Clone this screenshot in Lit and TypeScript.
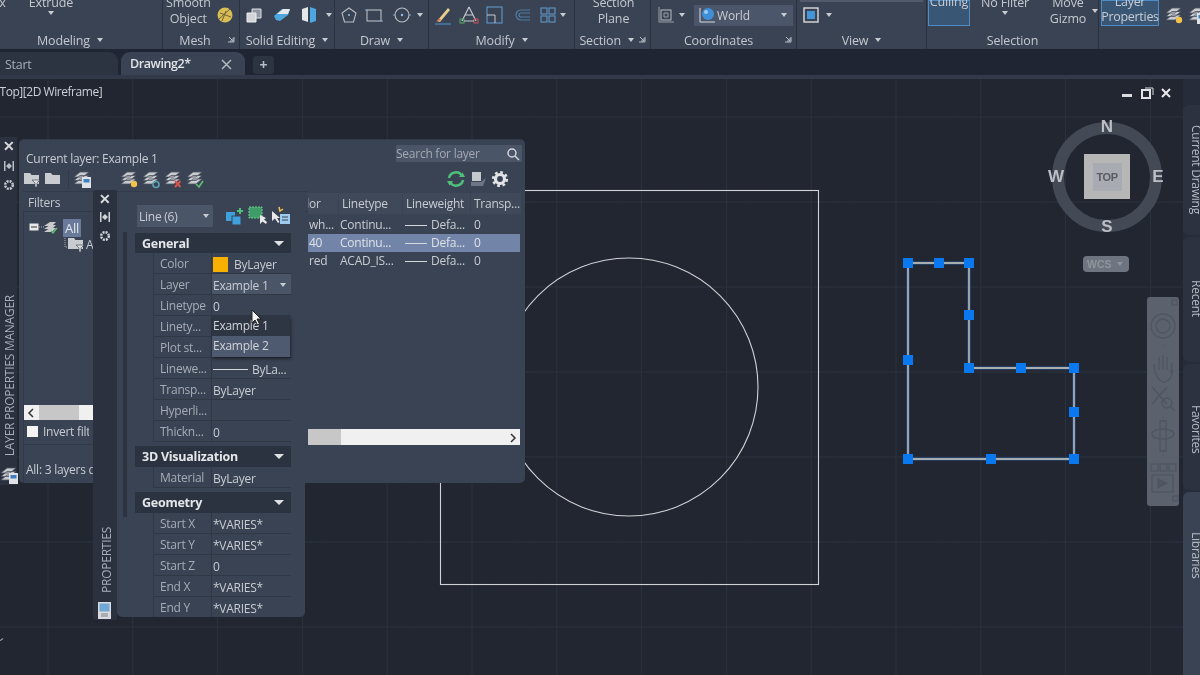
import { LitElement, html, css, svg } from "lit";
import { customElement } from "lit/decorators.js";

const ic = (w: number, content: unknown) => html`<svg class="ic" width=${w} height="20" viewBox="0 0 ${w} 20">${content}</svg>`;
const arrow = html`<i class="dd"></i>`;
const launcher = html`<svg class="launch" width="7" height="7" viewBox="0 0 7 7"><path d="M1 1L5 5M5 2V5H2M0 6H6V1" stroke="#b8bdc6" fill="none" stroke-width="1"/></svg>`;

const layerIcon = (accent: string, kind: string) => html`<svg width="20" height="20" viewBox="0 0 20 20">
  <path d="M2 8L8 3H17L11 8ZM2 11.500L8 6.500H17L11 11.500ZM2 15L8 10H17L11 15Z" fill="#c9cbcd" stroke="#4a5262" stroke-width=".8"/>
  ${kind === "sun" ? svg`<circle cx="15" cy="15" r="3.200" fill=${accent}/>` : ""}
  ${kind === "x" ? svg`<path d="M12 12L17.500 18M17.500 12L12 18" stroke=${accent} stroke-width="2"/>` : ""}
  ${kind === "check" ? svg`<path d="M11 15L14 18L18 12" stroke=${accent} stroke-width="1.600" fill="none"/>` : ""}
  ${kind === "dot" ? svg`<circle cx="15" cy="15.500" r="3" fill="none" stroke=${accent} stroke-width="1.600"/>` : ""}
  ${kind === "doc" ? svg`<rect x="10" y="8" width="9" height="11" fill="#dfe3e8"/><rect x="11.500" y="10" width="6" height="3.500" fill="#3d7fc0"/>` : ""}
</svg>`;

const folder = (filter: boolean) => html`<svg width="18" height="18" viewBox="0 0 18 18"><path d="M1 3H7L8.500 5H16V14H1Z" fill="#c8cbcf"/>${filter ? svg`<path d="M9 10H17L14 13V17H12V13Z" fill="#d8dadd" stroke="#3a4353" stroke-width=".6"/>` : ""}</svg>`;

const rows1 = [["Color", "swatch"], ["Layer", "select"], ["Linetype", "0"], ["Linety...", ""], ["Plot st...", ""], ["Linewe...", "lw"], ["Transp...", "ByLayer"], ["Hyperli...", ""], ["Thickn...", "0"]];
const rows3 = ["Start X|*VARIES*", "Start Y|*VARIES*", "Start Z|0", "End X|*VARIES*", "End Y|*VARIES*"].map((s) => s.split("|"));

@customElement("app-root")
export class AppRoot extends LitElement {
  static styles = css`
    :host { display: block; width: 1200px; height: 675px; overflow: hidden; position: relative; background: #212631; font-family: "Open Sans", "Liberation Sans", sans-serif; color: #cdd1d7; font-size: 12px; letter-spacing: -0.25px; filter: blur(0.35px); }
    .shell { display: flex; flex-direction: column; height: 675px; }
    .ribbon { display: flex; height: 49px; background: #3a4353; flex: none; overflow: hidden; letter-spacing: -0.15px; }
    .group { display: flex; flex-direction: column; flex: none; border-right: 1px solid #2a303c; box-sizing: border-box; height: 49px; }
    .content { height: 30px; display: flex; align-items: center; flex: none; position: relative; }
    .label { height: 19px; display: flex; align-items: center; justify-content: center; gap: 7px; color: #c4c8cf; font-size: 12.5px; line-height: 19px; padding-top: 1px; box-sizing: border-box; position: relative; white-space: nowrap; }
    .launch { position: absolute; right: 4px; top: 6px; }
    .dd { display: inline-block; width: 0; height: 0; border-left: 3.500px solid transparent; border-right: 3.500px solid transparent; border-top: 4px solid #c8ccd2; flex: none; }
    .ic { display: block; flex: none; }
    .ml3 { margin-left: 3px; }
    .ml-3 { margin-left: -3px; }
    .txt { display: flex; flex-direction: column; align-items: center; line-height: 16px; font-size: 12.5px; color: #c4c8cf; align-self: flex-end; white-space: nowrap; padding-bottom: 3px; }
    .boxt { margin-left: -16px; padding-bottom: 19px; }
    .extrude { padding-bottom: 15px; gap: 0; }
    .g1 { width: 163px; } .g1 .label { padding-right: 22px; } .g1 .content { gap: 23px; align-items: flex-end; }
    .g2 { width: 77px; } .g2 .label { padding-right: 12px; } .g2 .content { padding-left: 3px; gap: 3px; }
    .g3 { width: 95px; } .g3 .content { padding-left: 5px; gap: 7px; }
    .g4 { width: 94px; } .g4 .content { padding-left: 4px; gap: 5px; }
    .g5 { width: 146px; } .g5 .content { padding-left: 4px; gap: 5px; }
    .g6 { width: 76px; } .g6 .label { justify-content: flex-end; padding-right: 16px; } .g6 .content { justify-content: center; padding-left: 2px; }
    .g7 { width: 146px; } .g7 .label { padding-right: 10px; } .g7 .content { padding-left: 5px; gap: 3px; }
    .g8 { width: 130px; } .g8 .content { padding-left: 4px; gap: 5px; }
    .g9 { width: 172px; } .g9 .content { padding-left: 1px; align-items: flex-start; }
    .g10 { width: 101px; border-right: 0; } .g10 .content { padding-left: 2px; gap: 3px; align-items: flex-start; }
    .world { width: 99px; height: 21px; background: #4b566a; display: flex; align-items: center; box-sizing: border-box; padding: 0 6px 0 3px; gap: 0; font-size: 12px; color: #c9cdd4; margin-left: 6px; }
    .world .dd { margin-left: auto; }
    .topbar { position: absolute; left: 3px; top: -1px; width: 123px; height: 3px; background: #52596a; }
    .btnblue { background: #3a5675; border: 1px solid #4f8bc5; height: 26px; box-sizing: border-box; display: flex; flex-direction: column; align-items: center; justify-content: flex-end; line-height: 15px; flex: none; font-size: 12.5px; color: #c8ccd2; white-space: nowrap; }
    .culling { width: 42px; padding-bottom: 16px; }
    .props-btn { width: 58px; padding-bottom: 1px; letter-spacing: -0.3px; }
    .sel-col { display: flex; flex-direction: column; align-items: center; line-height: 16px; font-size: 12.5px; color: #c4c8cf; white-space: nowrap; }
    .nofilter { width: 68px; height: 26px; justify-content: flex-end; padding-bottom: 11px; gap: 0; box-sizing: border-box; margin-left: 1px; }
    .gizmo { width: 56px; height: 27px; justify-content: flex-end; position: relative; margin-left: 1px; }
    .gizmo .dd { position: absolute; right: -2px; top: 9px; }
    .iconpad { margin: 5px 0 0 2px; display: flex; }
    .iconpad2 { margin: 5px 0 0 0; display: flex; }
    .tabs { height: 26px; background: #1f2533; flex: none; display: flex; align-items: flex-end; gap: 3px; }
    .tab { height: 23px; display: flex; align-items: center; box-sizing: border-box; font-size: 12.5px; line-height: 22px; padding-top: 2px; }
    .start { width: 118px; padding-left: 5px; background: #2c3341; color: #a7adb7; border-radius: 0 9px 0 0; padding-top: 3px; }
    .drawing { width: 124px; padding: 1px 13px 0 9px; justify-content: space-between; background: #3a4353; color: #e2e4e8; font-weight: 600; border-radius: 9px 9px 0 0; letter-spacing: -0.4px; }
    .plus { width: 21px; height: 18px; margin: 0 0 1px 5px; background: #2c3341; color: #b8bcc4; justify-content: center; border-radius: 3px; font-weight: 700; font-size: 14px; padding-top: 0; }
    .band { height: 4px; flex: none; background: #323a49; }
    .canvas { flex: 1; position: relative; background: #212631; overflow: hidden; }
    .canvas > svg.draw { position: absolute; left: 0; top: -79px; }
    .vplabel { position: absolute; left: -4px; top: 4px; font-size: 12px; color: #ccd0d6; white-space: nowrap; letter-spacing: -0.45px; }
    .winctl { position: absolute; left: 1120px; top: 6px; }
    .compass { position: absolute; left: 1040px; top: 37px; width: 135px; height: 200px; letter-spacing: 0; }
    .cp { position: absolute; font: 700 17px/18px "Liberation Sans", sans-serif; color: #bdbfc4; width: 24px; text-align: center; }
    .cube { position: absolute; left: 44px; top: 38px; width: 46px; height: 45px; background: #b6b6b6; display: flex; align-items: center; justify-content: center; }
    .cube span { width: 29px; height: 28px; background: #a9abb2; color: #585c66; font: 700 11px/28px "Liberation Sans", sans-serif; text-align: center; letter-spacing: -0.4px; }
    .wcs { position: absolute; left: 43px; top: 140px; width: 46px; height: 16px; border-radius: 4px; background: #6e7480; color: #8f949c; font: 700 10.500px/16px "Liberation Sans", sans-serif; padding-left: 4px; box-sizing: border-box; display: flex; align-items: center; gap: 5px; }
    .wcs .dd { border-top-color: #8f949c; }
    .navbar { position: absolute; left: 1147px; top: 218px; width: 32px; height: 209px; background: #5b626d; border-radius: 3px; }
    .rdock { position: absolute; left: 1183px; top: 0; width: 17px; height: 596px; background: #262c39; display: flex; flex-direction: column; gap: 2px; padding-top: 26px; box-sizing: border-box; overflow: hidden; }
    .rtab { width: 27px; background: #2c3240; border-radius: 6px 0 0 6px; writing-mode: vertical-rl; color: #b5bac3; font-size: 12px; padding: 20px 0 0 0; line-height: 27px; overflow: hidden; white-space: nowrap; box-sizing: border-box; flex: none; }
    .rt1 { height: 130px; } .rt2 { height: 125px; padding-top: 43px; } .rt3 { height: 126px; padding-top: 41px; } .rt4 { height: 200px; background: #3a4353; padding-top: 40px; }
    .lm { position: absolute; left: 0; top: 58px; display: flex; width: 525px; height: 348px; }
    .strip { background: #2b313e; display: flex; flex-direction: column; align-items: center; flex: none; position: relative; }
    .lm .strip { width: 17px; margin-right: 2px; }
    .lm .strip .x { height: 18px; line-height: 18px; margin-bottom: 6px; }
    .strip .x { font: 700 14px/20px "Liberation Sans", sans-serif; color: #d8dadd; height: 20px; }
    .strip svg { display: block; margin-bottom: 8px; }
    .vtxt { writing-mode: vertical-rl; transform: rotate(180deg); position: absolute; white-space: nowrap; color: #a9afb9; font-size: 12px; }
    .lm .vtxt { left: 1px; top: 158px; }
    .lmbody { flex: 1; background: #3a4353; border-radius: 5px; padding: 5px 3px 0 4px; display: flex; flex-direction: column; box-sizing: border-box; border-top: 1px solid #323a49; margin-top: 2px; margin-bottom: 2px; }
    .lmhead { display: flex; justify-content: space-between; align-items: flex-start; height: 25px; padding-left: 3px; flex: none; }
    .lmhead b { font-weight: 400; color: #c8ccd2; font-size: 12px; margin-top: 5px; }
    .search { width: 126px; height: 17px; background: #4b5568; color: #a3a9b3; font-size: 12px; line-height: 17px; padding-left: 0; box-sizing: border-box; display: flex; justify-content: space-between; align-items: center; padding-right: 2px; }
    .lmtools { display: flex; height: 18px; align-items: center; flex: none; }
    .lmtools svg { display: block; flex: none; }
    .sp { flex: none; }
    .lmmain { display: flex; flex: 1; min-height: 0; margin-top: 5px; }
    .filters { width: 285px; flex: none; display: flex; flex-direction: column; position: relative; margin-top: -2px; }
    .fhead { height: 21px; line-height: 21px; padding-left: 5px; color: #c3c7ce; border-bottom: 1px solid #323a49; border-top: 1px solid #323a49; box-sizing: border-box; flex: none; }
    .tree { flex: 1; position: relative; border-left: 1px solid #323a49; }
    .allsel { position: absolute; left: 39px; top: 7px; background: #6a7a9b; color: #e4e6ea; padding: 0 2px; line-height: 18px; font-size: 13px; }
    .hs { position: absolute; left: 0; top: 193px; width: 69px; height: 15px; background: #f0f0f0; }
    .hs i { position: absolute; left: 15px; top: 0; width: 40px; height: 15px; background: #c7c7c7; }
    .inv { position: absolute; left: 3px; top: 211px; width: 62px; overflow: hidden; display: flex; align-items: center; gap: 5px; white-space: nowrap; color: #c8ccd2; }
    .inv i { width: 11px; height: 11px; background: #f4f4f4; display: block; flex: none; }
    .status { position: absolute; left: 2px; top: 249px; white-space: nowrap; color: #c8ccd2; }
    .fdiv { position: absolute; left: -1px; top: 232px; width: 100%; height: 1px; background: #323a49; }
    .table { flex: 1; position: relative; font-size: 12px; overflow: hidden; }
    .tr { display: grid; grid-template-columns: 31px 64px 68px 1fr; height: 18px; line-height: 18px; color: #c8ccd2; white-space: nowrap; }
    .th { height: 21px; line-height: 21px; margin-bottom: 2px; }
    .tr span { padding-left: 1px; overflow: hidden; }
    .tr span:last-child { padding-left: 3px; }
    .th span, .th span:last-child { background: #404959; margin-right: 1px; padding-left: 3px; }
    .th span:first-child { padding-left: 0; text-indent: -16px; }
    .tr.sel { background: #7284a7; color: #dee2e8; width: 212px; }
    .tr .w { display: flex; align-items: center; gap: 4px; padding-left: 2px; }
    .tr .w i { display: block; width: 22px; height: 1px; background: #d5d7da; flex: none; }
    .vs { position: absolute; left: 0; bottom: 38px; height: 16px; width: 212px; background: #f0f0f0; color: #333; }
    .vs i { position: absolute; left: 0; top: 0; width: 33px; height: 16px; background: #c7c7c7; }
    .vs svg { position: absolute; right: 3px; top: 4px; }
    .pp { position: absolute; left: 93px; top: 111px; display: flex; width: 212px; height: 430px; }
    .pp .strip { width: 24px; border-radius: 3px 0 0 3px; }
    .pp .strip .x { margin-top: -1px; }
    .pp .vtxt { left: 5px; top: 337px; }
    .ppdoc { position: absolute; left: 5px; top: 412px; }
    .ppbody { flex: 1; background: #3a4353; border-radius: 5px; margin-top: 2px; margin-bottom: 3px; padding: 12px 14px 0 19px; box-sizing: border-box; position: relative; overflow: hidden; }
    .track { position: absolute; left: 6px; top: 40px; width: 4px; height: 285px; background: #2d3441; }
    .ptop { display: flex; align-items: center; gap: 12px; height: 24px; margin-bottom: 5px; margin-left: 1px; }
    .psel { width: 83px; height: 22px; background: #4b5568; display: flex; align-items: center; justify-content: space-between; padding: 0 4px 0 2px; box-sizing: border-box; font-size: 12px; color: #c8ccd2; }
    .ptools { display: flex; gap: 3px; }
    .sec { height: 21px; background: #2c3340; font-weight: 700; color: #e4e6e9; padding: 0 7px; display: flex; align-items: center; justify-content: space-between; font-size: 12.500px; margin-left: -1px; }
    .sec.first { height: 20px; }
    .sec .dd { border-left-width: 5px; border-right-width: 5px; border-top-width: 5px; border-top-color: #dfe1e4; }
    .sec.gap { margin-top: 4px; }
    .prow { height: 21px; display: grid; grid-template-columns: 59px 1fr; border-bottom: 1px solid #303745; box-sizing: border-box; margin-left: 17px; white-space: nowrap; }
    .prow .k { color: #a6acb6; padding-left: 6px; border-left: 1px solid #303745; border-right: 1px solid #303745; overflow: hidden; font-size: 12px; line-height: 22px; }
    .prow .v { color: #c8ccd2; padding-left: 1px; padding-top: 2px; box-sizing: border-box; overflow: hidden; display: flex; align-items: center; font-size: 12px; }
    .swatch { width: 15px; height: 15px; background: #f7b000; margin-right: 6px; flex: none; }
    .lwline { width: 35px; height: 1px; background: #d5d7da; margin-right: 4px; flex: none; }
    .v.selv { background: #4b5568; justify-content: space-between; padding-right: 5px; }
    .menu { position: absolute; left: 95px; top: 124px; width: 78px; height: 41px; background: #2e3543; box-shadow: 1px 2px 3px rgba(0,0,0,.45); display: flex; flex-direction: column; color: #d0d3d8; font-size: 12px; }
    .menu div { height: 20px; line-height: 20px; padding-left: 1px; }
    .menu .hi { background: #4e5a6f; height: 21px; }
    .cursor { position: absolute; left: 251px; top: 230px; }
    .ucs { position: absolute; left: 0; top: 560px; width: 5px; height: 5px; border-top: 1px solid #9aa0a8; transform: rotate(-35deg); }
  `;

  ribbon() {
    return html`<div class="ribbon">
      <div class="group g1"><div class="content"><div class="txt boxt">Box</div>
        <div class="sel-col extrude">Extrude<i class="dd"></i></div></div>
        <div class="label">Modeling ${arrow}</div></div>
      <div class="group g2"><div class="content"><div class="txt"><span>Smooth</span><span>Object</span></div>
        ${ic(22, svg`<circle cx="11" cy="10" r="7.500" fill="#d9bd55"/><path d="M5 14L16 4M8 16L12 6M6 8L17 12" stroke="#6d6238" stroke-width="1"/>`)}</div>
        <div class="label">Mesh${launcher}</div></div>
      <div class="group g3"><div class="content">
        ${ic(20, svg`<path d="M7 4H16V13H7Z" fill="#8f97a4" stroke="#dfe1e4"/><path d="M2 8H11V17H2Z" fill="#d3d5d8" stroke="#eee"/>`)}
        ${ic(20, svg`<path d="M2 11L10 4H18L16 10L8 16L4 15Z" fill="#4ea6e0"/><path d="M5 9L11 4H18L16 9H9Z" fill="#e6e8ea"/>`)}
        ${ic(20, svg`<path d="M3 4L9 2V17L3 15Z" fill="#e4e6e8"/><path d="M11 2L17 4V16L11 18Z" fill="#4ea6e0"/>`)}
        ${arrow}</div><div class="label">Solid Editing ${arrow}</div></div>
      <div class="group g4"><div class="content">
        ${ic(20, svg`<path d="M10 3L17 8L14.500 17H5.500L3 8Z" fill="none" stroke="#b9bdc4" stroke-width="1.100"/><circle cx="10" cy="10" r="1" fill="#8fc0e8"/>`)}
        ${ic(20, svg`<rect x="3" y="5" width="14" height="11" fill="none" stroke="#b9bdc4" stroke-width="1.100"/><path d="M3 5H1M17 16H19" stroke="#7fb2dc"/>`)}
        <span class="ml3">${ic(20, svg`<circle cx="10" cy="10" r="7" fill="none" stroke="#b9bdc4" stroke-width="1.100"/><circle cx="10" cy="10" r="1.200" fill="#8fc0e8"/><path d="M3 10H1M17 10H19" stroke="#7fb2dc"/>`)}</span>
        ${arrow}</div><div class="label">Draw ${arrow}</div></div>
      <div class="group g5"><div class="content">
        ${ic(20, svg`<path d="M4 16L15 3L17 5L7 17Z" fill="#e7cf8e"/><path d="M3 17L6 13L8 15Z" fill="#d86b5b"/><path d="M2 19H18" stroke="#4e8bc0" stroke-width="1.200"/>`)}
        ${ic(22, svg`<path d="M11 2L4 16M11 2L18 16M7 10H15" stroke="#c4c8cf" stroke-width="1.200" fill="none"/><rect x="2" y="14" width="4" height="4" fill="none" stroke="#55a86a"/><rect x="16" y="14" width="4" height="4" fill="none" stroke="#c85555"/><path d="M6 16H16" stroke="#c4c8cf"/>`)}
        ${ic(20, svg`<rect x="2" y="2" width="15" height="16" fill="none" stroke="#5f97c8" stroke-width="1.100"/><path d="M2 10H10V18" fill="none" stroke="#c4c8cf"/>`)}
        <span class="ml3">${ic(20, svg`<path d="M17 5H8A5 5 0 0 0 8 15H17M17 8H8A2 2 0 0 0 8 12H17" fill="none" stroke="#4f7da6" stroke-width="1.200"/>`)}</span>
        ${ic(20, svg`<g fill="none" stroke="#5f97c8" stroke-width="1.100"><rect x="3" y="3" width="6" height="6"/><rect x="11" y="3" width="6" height="6"/><rect x="3" y="11" width="6" height="6"/><rect x="11" y="11" width="6" height="6"/></g>`)}
        <i class="dd ml-3"></i></div><div class="label">Modify ${arrow}</div></div>
      <div class="group g6"><div class="content"><div class="txt"><span>Section</span><span>Plane</span></div></div>
        <div class="label">Section ${arrow}${launcher}</div></div>
      <div class="group g7"><div class="content">
        ${ic(20, svg`<rect x="5" y="5" width="10" height="10" fill="none" stroke="#b9bdc4"/><path d="M3 2V17H18M8 8H12V12H8Z" fill="none" stroke="#9aa0a8"/>`)}
        ${arrow}
        <div class="world">${ic(20, svg`<path d="M3 3V17H18" fill="none" stroke="#d8dadd"/><circle cx="11" cy="9" r="6" fill="#3f8fd8"/><circle cx="9" cy="7" r="2" fill="#9ccbef"/>`)}World ${arrow}</div>
        </div><div class="label">Coordinates${launcher}</div></div>
      <div class="group g8"><div class="content"><div class="topbar"></div>
        ${ic(20, svg`<rect x="3" y="3" width="14" height="14" fill="none" stroke="#d8dadd" stroke-width="1.400"/><rect x="6" y="6" width="8" height="8" fill="#4296d8"/>`)}
        ${arrow}</div><div class="label">View ${arrow}</div></div>
      <div class="group g9"><div class="content">
        <div class="btnblue culling">Culling</div>
        <div class="sel-col nofilter">No Filter${arrow}</div>
        <div class="sel-col gizmo"><span>Move</span><span>Gizmo</span>${arrow}</div>
        </div><div class="label">Selection</div></div>
      <div class="group g10"><div class="content">
        <div class="btnblue props-btn"><span>Layer</span><span>Properties</span></div>
        <span class="iconpad">${layerIcon("#f2c14e", "sun")}</span>
        <span class="iconpad2">${layerIcon("#57a4dc", "doc")}</span>
        </div><div class="label"></div></div>
    </div>`;
  }

  tabs() {
    return html`<div class="tabs">
      <div class="tab start">Start</div>
      <div class="tab drawing"><span>Drawing2*</span><svg width="11" height="11" viewBox="0 0 11 11"><path d="M1 1L10 10M10 1L1 10" stroke="#b4b9c1" stroke-width="1.500"/></svg></div>
      <div class="tab plus">+</div>
    </div>`;
  }

  drawing() {
    const vx = Array.from({ length: 14 }, (_, i) => 48 + i * 84.8);
    const hy = Array.from({ length: 8 }, (_, i) => 32 + i * 85);
    const fx = Array.from({ length: 60 }, (_, i) => 48 + i * 21.2 - 21.2);
    const pts = "908,263 969,263 969,368 1074,368 1074,459 908,459 908,263";
    const grips = [[908,263],[939,263],[969,263],[969,315],[969,368],[1021,368],[1074,368],[1074,412],[1074,459],[991,459],[908,459],[908,360]];
    return html`<svg class="draw" width="1200" height="675" viewBox="0 0 1200 675">
      ${fx.map((x) => svg`<line x1=${x} x2=${x} y1="79" y2="675" stroke="#232834"/>`)}
      ${vx.map((x) => svg`<line x1=${x} x2=${x} y1="79" y2="675" stroke="#2d3340"/>`)}
      ${hy.map((y) => svg`<line x1="0" x2="1200" y1=${y} y2=${y} stroke="#2d3340"/>`)}
      <rect x="440.500" y="190.500" width="378" height="394" fill="none" stroke="#d0d2d5" stroke-width="1.100"/>
      <circle cx="629" cy="387" r="129" fill="none" stroke="#d0d2d5" stroke-width="1.100"/>
      <polyline points=${pts} fill="none" stroke="#2a5fa8" stroke-width="4" opacity=".4"/>
      <polyline points=${pts} fill="none" stroke="#a8adb0" stroke-width="1.800"/>
      ${grips.map(([x, y]) => svg`<rect x=${x - 5} y=${y - 5} width="10" height="10" fill="#0a78ee"/>`)}
    </svg>`;
  }

  nav() {
    return html`<div class="navbar"><svg width="32" height="209" viewBox="0 0 32 209" fill="none" stroke="#4f5661" stroke-width="1.300">
      <circle cx="16" cy="29" r="12"/><circle cx="16" cy="29" r="7"/>
      <rect x="25" y="3" width="5" height="5"/><path d="M16 48v1"/>
      <path d="M8 75L7 67M12 73V60M16 73V58M20 73V60M24 76L25 66M8 75Q12 86 18 85Q24 84 26 73"/>
      <path d="M5 90L20 107M20 90L5 107"/><circle cx="20" cy="106" r="5"/><path d="M24 110L28 114"/>
      <path d="M16 120v1"/><ellipse cx="16" cy="137" rx="11" ry="5"/><path d="M13 124H19V154H13Z"/><path d="M16 158v1"/>
      <rect x="4" y="167" width="7" height="7"/><rect x="13" y="167" width="7" height="7"/><rect x="22" y="167" width="7" height="7"/>
      <rect x="5" y="178" width="21" height="17"/><path d="M11 182L20 186L11 191Z" fill="#4f5661"/><rect x="26" y="199" width="5" height="5"/>
    </svg></div>`;
  }

  compass() {
    return html`<div class="compass">
      <svg width="135" height="130" viewBox="0 0 135 130" style="position:absolute;left:0;top:0"><circle cx="67" cy="61" r="49" fill="none" stroke="#434955" stroke-width="12"/></svg>
      <div class="cp" style="left:55px;top:2px">N</div>
      <div class="cp" style="left:4px;top:52px">W</div>
      <div class="cp" style="left:106px;top:52px">E</div>
      <div class="cp" style="left:55px;top:102px">S</div>
      <div class="cube"><span>TOP</span></div>
      <div class="wcs">WCS ${arrow}</div>
    </div>`;
  }

  layerManager() {
    return html`<div class="lm">
      <div class="strip">
        <div class="x">✕</div>
        <svg width="10" height="10" viewBox="0 0 10 10"><path d="M0 0H1.500V10H0ZM8.500 0H10V10H8.500ZM2 5L5 2V8ZM8 5L5 2V8Z" fill="#b8bcc4"/></svg>
        <svg width="12" height="12" viewBox="0 0 12 12"><circle cx="6" cy="6" r="3.800" fill="none" stroke="#c9cdd3" stroke-width="2.500" stroke-dasharray="2 1"/></svg>
        <div class="vtxt">LAYER PROPERTIES MANAGER</div>
        <span style="position:absolute;left:-1px;top:328px">${layerIcon("#fff", "doc")}</span>
      </div>
      <div class="lmbody">
        <div class="lmhead"><b>Current layer: Example 1</b>
          <div class="search">Search for layer<svg width="14" height="14" viewBox="0 0 14 14"><circle cx="6" cy="6" r="4" fill="none" stroke="#d3d6da" stroke-width="1.500"/><path d="M9 9L13 13" stroke="#d3d6da" stroke-width="1.500"/></svg></div></div>
        <div class="lmtools">
          ${folder(true)}<span class="sp" style="width:3px"></span>${folder(false)}
          <span class="sp" style="width:6px;height:18px;border-right:1px solid #323a49;margin-right:3px"></span>
          ${layerIcon("#fff", "doc")}
          <span class="sp" style="width:27px"></span>
          ${layerIcon("#f2c14e", "sun")}<span class="sp" style="width:2px"></span>
          ${layerIcon("#5ba3b5", "dot")}<span class="sp" style="width:2px"></span>
          ${layerIcon("#d8544c", "x")}<span class="sp" style="width:2px"></span>
          ${layerIcon("#61c06f", "check")}
          <span class="sp" style="width:241px"></span>
          <svg width="20" height="20" viewBox="0 0 20 20"><path d="M3 9A7 7 0 0 1 16 7M17 11A7 7 0 0 1 4 13" fill="none" stroke="#4fc07a" stroke-width="2.500"/><path d="M13 8H19L16.500 3.500ZM7 12H1L3.500 16.500Z" fill="#4fc07a"/></svg>
          <span class="sp" style="width:3px"></span>
          <svg width="18" height="18" viewBox="0 0 18 18"><path d="M3 2H12V11H3Z" fill="#c5c8cc"/><path d="M2 12H12L17 8L14 16H2Z" fill="#6f7683"/></svg>
          <span class="sp" style="width:4px"></span>
          <svg width="18" height="18" viewBox="0 0 18 18"><circle cx="9" cy="9" r="4.500" fill="none" stroke="#e2e4e7" stroke-width="3.200"/><circle cx="9" cy="9" r="6.800" fill="none" stroke="#e2e4e7" stroke-width="2.600" stroke-dasharray="2.700 2.640"/></svg>
        </div>
        <div class="lmmain">
          <div class="filters">
            <div class="fhead">Filters</div>
            <div class="tree">
              <svg width="60" height="60" viewBox="0 0 60 60" style="position:absolute;left:0;top:0">
                <rect x="5.500" y="11.500" width="9" height="7" fill="#e8e8e8"/><path d="M7 15H13" stroke="#333"/>
                <path d="M15 15H20M41 26V35H47" stroke="#aab0b8" stroke-dasharray="1 1" fill="none"/>
                <path d="M20 14L26 10H32L28 14ZM20 17L26 13H32L28 17ZM20 20L26 16H32L28 20Z" fill="#c9cbcd"/><path d="M27 19L29 21L33 16" stroke="#5fc06f" stroke-width="1.300" fill="none"/>
              </svg>
              <div class="allsel">All</div>
              <span style="position:absolute;left:43px;top:23px">${folder(true)}</span>
              <span style="position:absolute;left:62px;top:24px;color:#c3c7ce">A</span>
              <div class="hs"><i></i><svg width="8" height="10" viewBox="0 0 8 10" style="position:absolute;left:3px;top:3px"><path d="M6 1L2 5L6 9" fill="none" stroke="#333" stroke-width="1.500"/></svg></div>
              <div class="fdiv"></div>
              <div class="inv"><i></i>Invert filter</div>
              <div class="status">All: 3 layers displayed</div>
            </div>
          </div>
          <div class="table">
            <div class="tr th"><span>Color</span><span>Linetype</span><span>Lineweight</span><span>Transp...</span></div>
            <div class="tr"><span>wh...</span><span>Continu...</span><span class="w"><i></i>Defa...</span><span>0</span></div>
            <div class="tr sel"><span>40</span><span>Continu...</span><span class="w"><i></i>Defa...</span><span>0</span></div>
            <div class="tr"><span>red</span><span>ACAD_IS...</span><span class="w"><i></i>Defa...</span><span>0</span></div>
            <div class="vs"><i></i><svg width="8" height="10" viewBox="0 0 8 10"><path d="M2 1L6 5L2 9" fill="none" stroke="#333" stroke-width="1.500"/></svg></div>
          </div>
        </div>
      </div>
    </div>`;
  }

  props() {
    return html`<div class="pp">
      <div class="strip">
        <div class="x">✕</div>
        <svg width="10" height="10" viewBox="0 0 10 10" style="margin-top:3px"><path d="M0 0H1.500V10H0ZM8.500 0H10V10H8.500ZM2 5L5 2V8ZM8 5L5 2V8Z" fill="#d0d3d8"/></svg>
        <svg width="12" height="12" viewBox="0 0 12 12"><circle cx="6" cy="6" r="3.800" fill="none" stroke="#d0d3d8" stroke-width="2.500" stroke-dasharray="2 1"/></svg>
        <div class="vtxt">PROPERTIES</div>
        <svg class="ppdoc" width="13" height="17" viewBox="0 0 13 17"><rect width="13" height="17" fill="#d8dade"/><rect x="1.500" y="1.500" width="10" height="8" fill="#6fa8d4"/><path d="M3 12H10M3 14H10" stroke="#7b8087"/></svg>
      </div>
      <div class="ppbody">
        <div class="track"></div>
        <div class="ptop">
          <div class="psel">Line (6) ${arrow}</div>
          <div class="ptools">
            <svg width="20" height="20" viewBox="0 0 20 20"><rect x="1" y="6" width="9" height="9" fill="#3fa0dc"/><rect x="7" y="10" width="9" height="9" fill="#3fa0dc" stroke="#3a4353"/><path d="M15 2V8M12 5H18" stroke="#4fc07a" stroke-width="2"/></svg>
            <svg width="20" height="20" viewBox="0 0 20 20"><rect x="1" y="1" width="13" height="11" fill="#3f9b68" stroke="#6fd08f" stroke-dasharray="2 1"/><path d="M12 9L12 18L14.500 15.500L18 18L19 16L16 13.500L18 12Z" fill="#e8e8e8"/></svg>
            <svg width="20" height="20" viewBox="0 0 20 20"><path d="M1 5L1 15L4 12.500L7 17L8.500 16L6 12H9Z" fill="#e8e8e8"/><path d="M8 1L9 5L12 3" stroke="#f2c14e" fill="none" stroke-width="1.500"/><rect x="9" y="8" width="10" height="10" fill="#9ccbef"/><path d="M11 11H17M11 14H17" stroke="#3a4353"/></svg>
          </div>
        </div>
        <div class="sec first">General ${arrow}</div>
        ${rows1.map(([k, v]) => html`<div class="prow"><div class="k">${k}</div>
          ${v === "swatch" ? html`<div class="v"><i class="swatch"></i>ByLayer</div>`
          : v === "select" ? html`<div class="v selv">Example 1 ${arrow}</div>`
          : v === "lw" ? html`<div class="v"><i class="lwline"></i>ByLa...</div>`
          : html`<div class="v">${v}</div>`}</div>`)}
        <div class="sec gap">3D Visualization ${arrow}</div>
        <div class="prow"><div class="k">Material</div><div class="v">ByLayer</div></div>
        <div class="sec gap">Geometry ${arrow}</div>
        ${rows3.map(([k, v]) => html`<div class="prow"><div class="k">${k}</div><div class="v">${v}</div></div>`)}
        <div class="menu"><div>Example 1</div><div class="hi">Example 2</div></div>
      </div>
    </div>`;
  }

  render() {
    return html`<div class="shell">
      ${this.ribbon()}
      ${this.tabs()}
      <div class="band"></div>
      <div class="canvas">
        ${this.drawing()}
        <div class="vplabel">[Top][2D Wireframe]</div>
        <svg class="winctl" width="56" height="16" viewBox="0 0 56 16"><rect x="2" y="9" width="10" height="3" fill="#d8dadd"/><rect x="22" y="5" width="8" height="8" fill="none" stroke="#e2e4e7" stroke-width="2"/><path d="M25 3H33V10" fill="none" stroke="#d8dadd"/><path d="M42 4L50 12M50 4L42 12" stroke="#e8eaec" stroke-width="2"/></svg>
        ${this.compass()}
        ${this.nav()}
        <div class="rdock">
          <div class="rtab rt1">Current Drawing</div>
          <div class="rtab rt2">Recent</div>
          <div class="rtab rt3">Favorites</div>
          <div class="rtab rt4">Libraries</div>
        </div>
        ${this.layerManager()}
        ${this.props()}
        <svg class="cursor" width="12" height="18" viewBox="0 0 12 18"><path d="M1 1V14L4 11L6.500 16L8.500 15L6 10H10Z" fill="#f4f4f4" stroke="#222"/></svg>
        <div class="ucs"></div>
      </div>
    </div>`;
  }
}
